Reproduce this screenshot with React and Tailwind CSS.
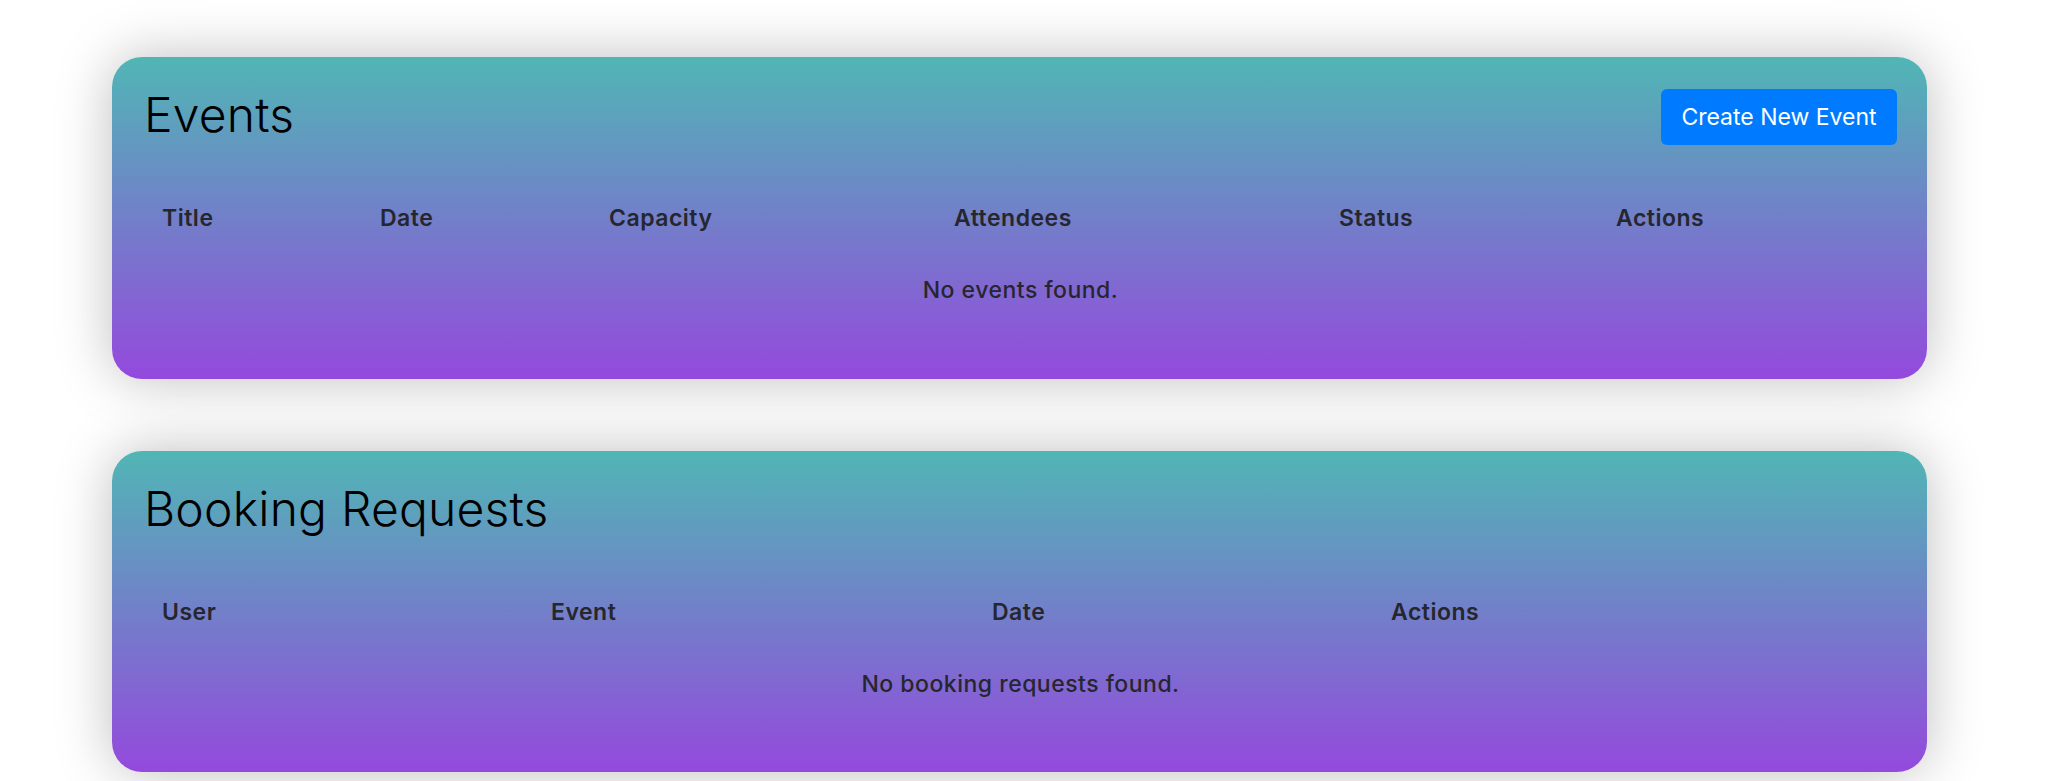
export default function App() {
  const font = { fontFamily: "Inter, 'Open Sans', sans-serif" };
  return (
    <div className="min-h-[781px] bg-white pt-[57px] pb-[10px]" style={font}>
      <div className="ml-[112px] w-[1815px] flex flex-col gap-[72px]">
        {/* Events card */}
        <section className="rounded-[30px] bg-[linear-gradient(180deg,#50b6b5_0%,#9449dd_100%)] shadow-[0_0_55px_rgba(0,0,0,0.26)] pl-[32px] pr-[30px] pt-[31px] pb-[53px]">
          <div className="flex h-[58px] items-center justify-between">
            <h2 className="pb-[5px] text-[48px] font-light leading-none text-black tracking-[0.2px]">Events</h2>
            <button className="h-[56px] w-[236px] rounded-[6px] bg-[#007bff] text-[23px] font-normal text-white">
              Create New Event
            </button>
          </div>
          <div className="mt-[36px] text-[23px] font-semibold tracking-[0.5px] text-[#26262e]">
            <div className="grid h-[72px] grid-cols-[218px_229px_345px_385px_277px_300px] items-center">
              <div className="pl-[18px]">Title</div>
              <div className="pl-[18px]">Date</div>
              <div className="pl-[18px]">Capacity</div>
              <div className="pl-[18px]">Attendees</div>
              <div className="pl-[18px]">Status</div>
              <div className="pl-[18px]">Actions</div>
            </div>
            <div className="flex h-[72px] items-center justify-center font-medium">No events found.</div>
          </div>
        </section>

        {/* Booking Requests card */}
        <section className="rounded-[30px] bg-[linear-gradient(180deg,#50b6b5_0%,#9449dd_100%)] shadow-[0_0_55px_rgba(0,0,0,0.26)] pl-[32px] pr-[30px] pt-[31px] pb-[52px]">
          <div className="flex h-[58px] items-center justify-between">
            <h2 className="pb-[5px] text-[48px] font-light leading-none text-black tracking-[0.2px]">Booking Requests</h2>
          </div>
          <div className="mt-[36px] text-[23px] font-semibold tracking-[0.5px] text-[#26262e]">
            <div className="grid h-[72px] grid-cols-[389px_441px_399px_525px] items-center">
              <div className="pl-[18px]">User</div>
              <div className="pl-[18px]">Event</div>
              <div className="pl-[18px]">Date</div>
              <div className="pl-[18px]">Actions</div>
            </div>
            <div className="flex h-[72px] items-center justify-center font-medium">No booking requests found.</div>
          </div>
        </section>
      </div>
    </div>
  );
}
